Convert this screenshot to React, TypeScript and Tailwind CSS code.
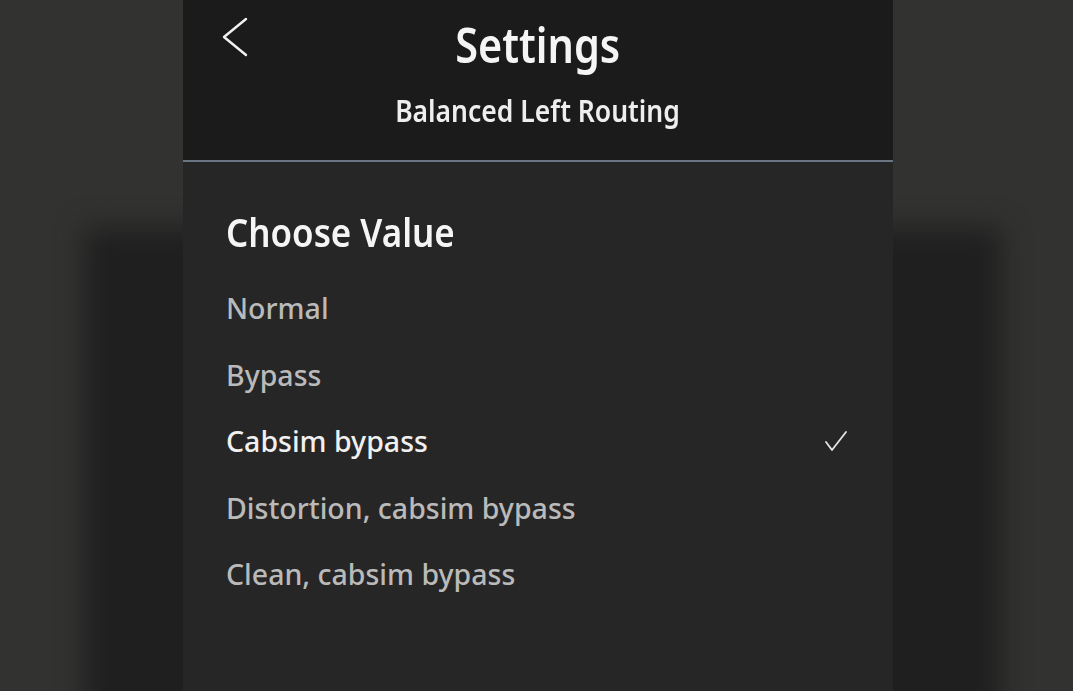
import { useState } from "react";

const OPTIONS = [
  "Normal",
  "Bypass",
  "Cabsim bypass",
  "Distortion, cabsim bypass",
  "Clean, cabsim bypass",
];

function BackIcon() {
  return (
    <svg width="28" height="40" viewBox="0 0 28 40" fill="none">
      <path d="M25 2 L3 20 L25 38" stroke="#f2f2f2" strokeWidth="2.4" strokeLinecap="round" strokeLinejoin="round" />
    </svg>
  );
}

function CheckIcon() {
  return (
    <svg width="24" height="22" viewBox="0 0 24 22" fill="none">
      <path d="M2 12 L8 20 L22 2" stroke="#e6e6e6" strokeWidth="1.8" strokeLinecap="round" strokeLinejoin="round" />
    </svg>
  );
}

export default function App() {
  const [selected, setSelected] = useState("Cabsim bypass");

  return (
    <div
      className="relative h-[691px] w-full overflow-hidden bg-[#323231] flex justify-center pl-[3px]"
      style={{ fontFamily: '"Noto Sans", "Open Sans", sans-serif' }}
    >
      {/* blurred backdrop */}
      <div className="absolute left-[85px] right-[72px] top-[228px] bottom-[-60px] bg-[#1f1f1f] blur-[14px]" />

      <div className="relative z-10 w-[710px] h-full flex flex-col">
        {/* HEADER */}
        <header className="relative h-[162px] shrink-0 bg-[#1b1b1b] border-b-2 border-[#6a7583]">
          <button className="absolute left-[38px] top-[17px]">
            <BackIcon />
          </button>
          <div className="flex flex-col items-center">
            <h1 className="mt-[20px] text-[49px] leading-none font-semibold scale-x-[0.845] text-[#f5f5f5]">
              Settings
            </h1>
            <p className="mt-[26px] text-[31px] leading-none font-semibold scale-x-[0.855] text-[#eeeeee]">
              Balanced Left Routing
            </p>
          </div>
        </header>

        {/* BODY */}
        <div className="flex-1 bg-[#262626] px-[43px] pt-[50px]">
          <h2 className="text-[40px] leading-none font-semibold origin-left scale-x-[0.873] text-[#f5f5f5]">
            Choose Value
          </h2>
          <ul className="mt-[23px] flex flex-col">
            {OPTIONS.map((o) => {
              const on = o === selected;
              return (
                <li
                  key={o}
                  onClick={() => setSelected(o)}
                  className="h-[66.5px] flex items-center justify-between cursor-pointer"
                >
                  <span
                    className={
                      "text-[28.5px] leading-none font-medium " +
                      (on ? "text-[#f0f0f0]" : "text-[#bababa]")
                    }
                  >
                    {o}
                  </span>
                  {on && (
                    <span className="mr-[2px]">
                      <CheckIcon />
                    </span>
                  )}
                </li>
              );
            })}
          </ul>
        </div>
      </div>
    </div>
  );
}
